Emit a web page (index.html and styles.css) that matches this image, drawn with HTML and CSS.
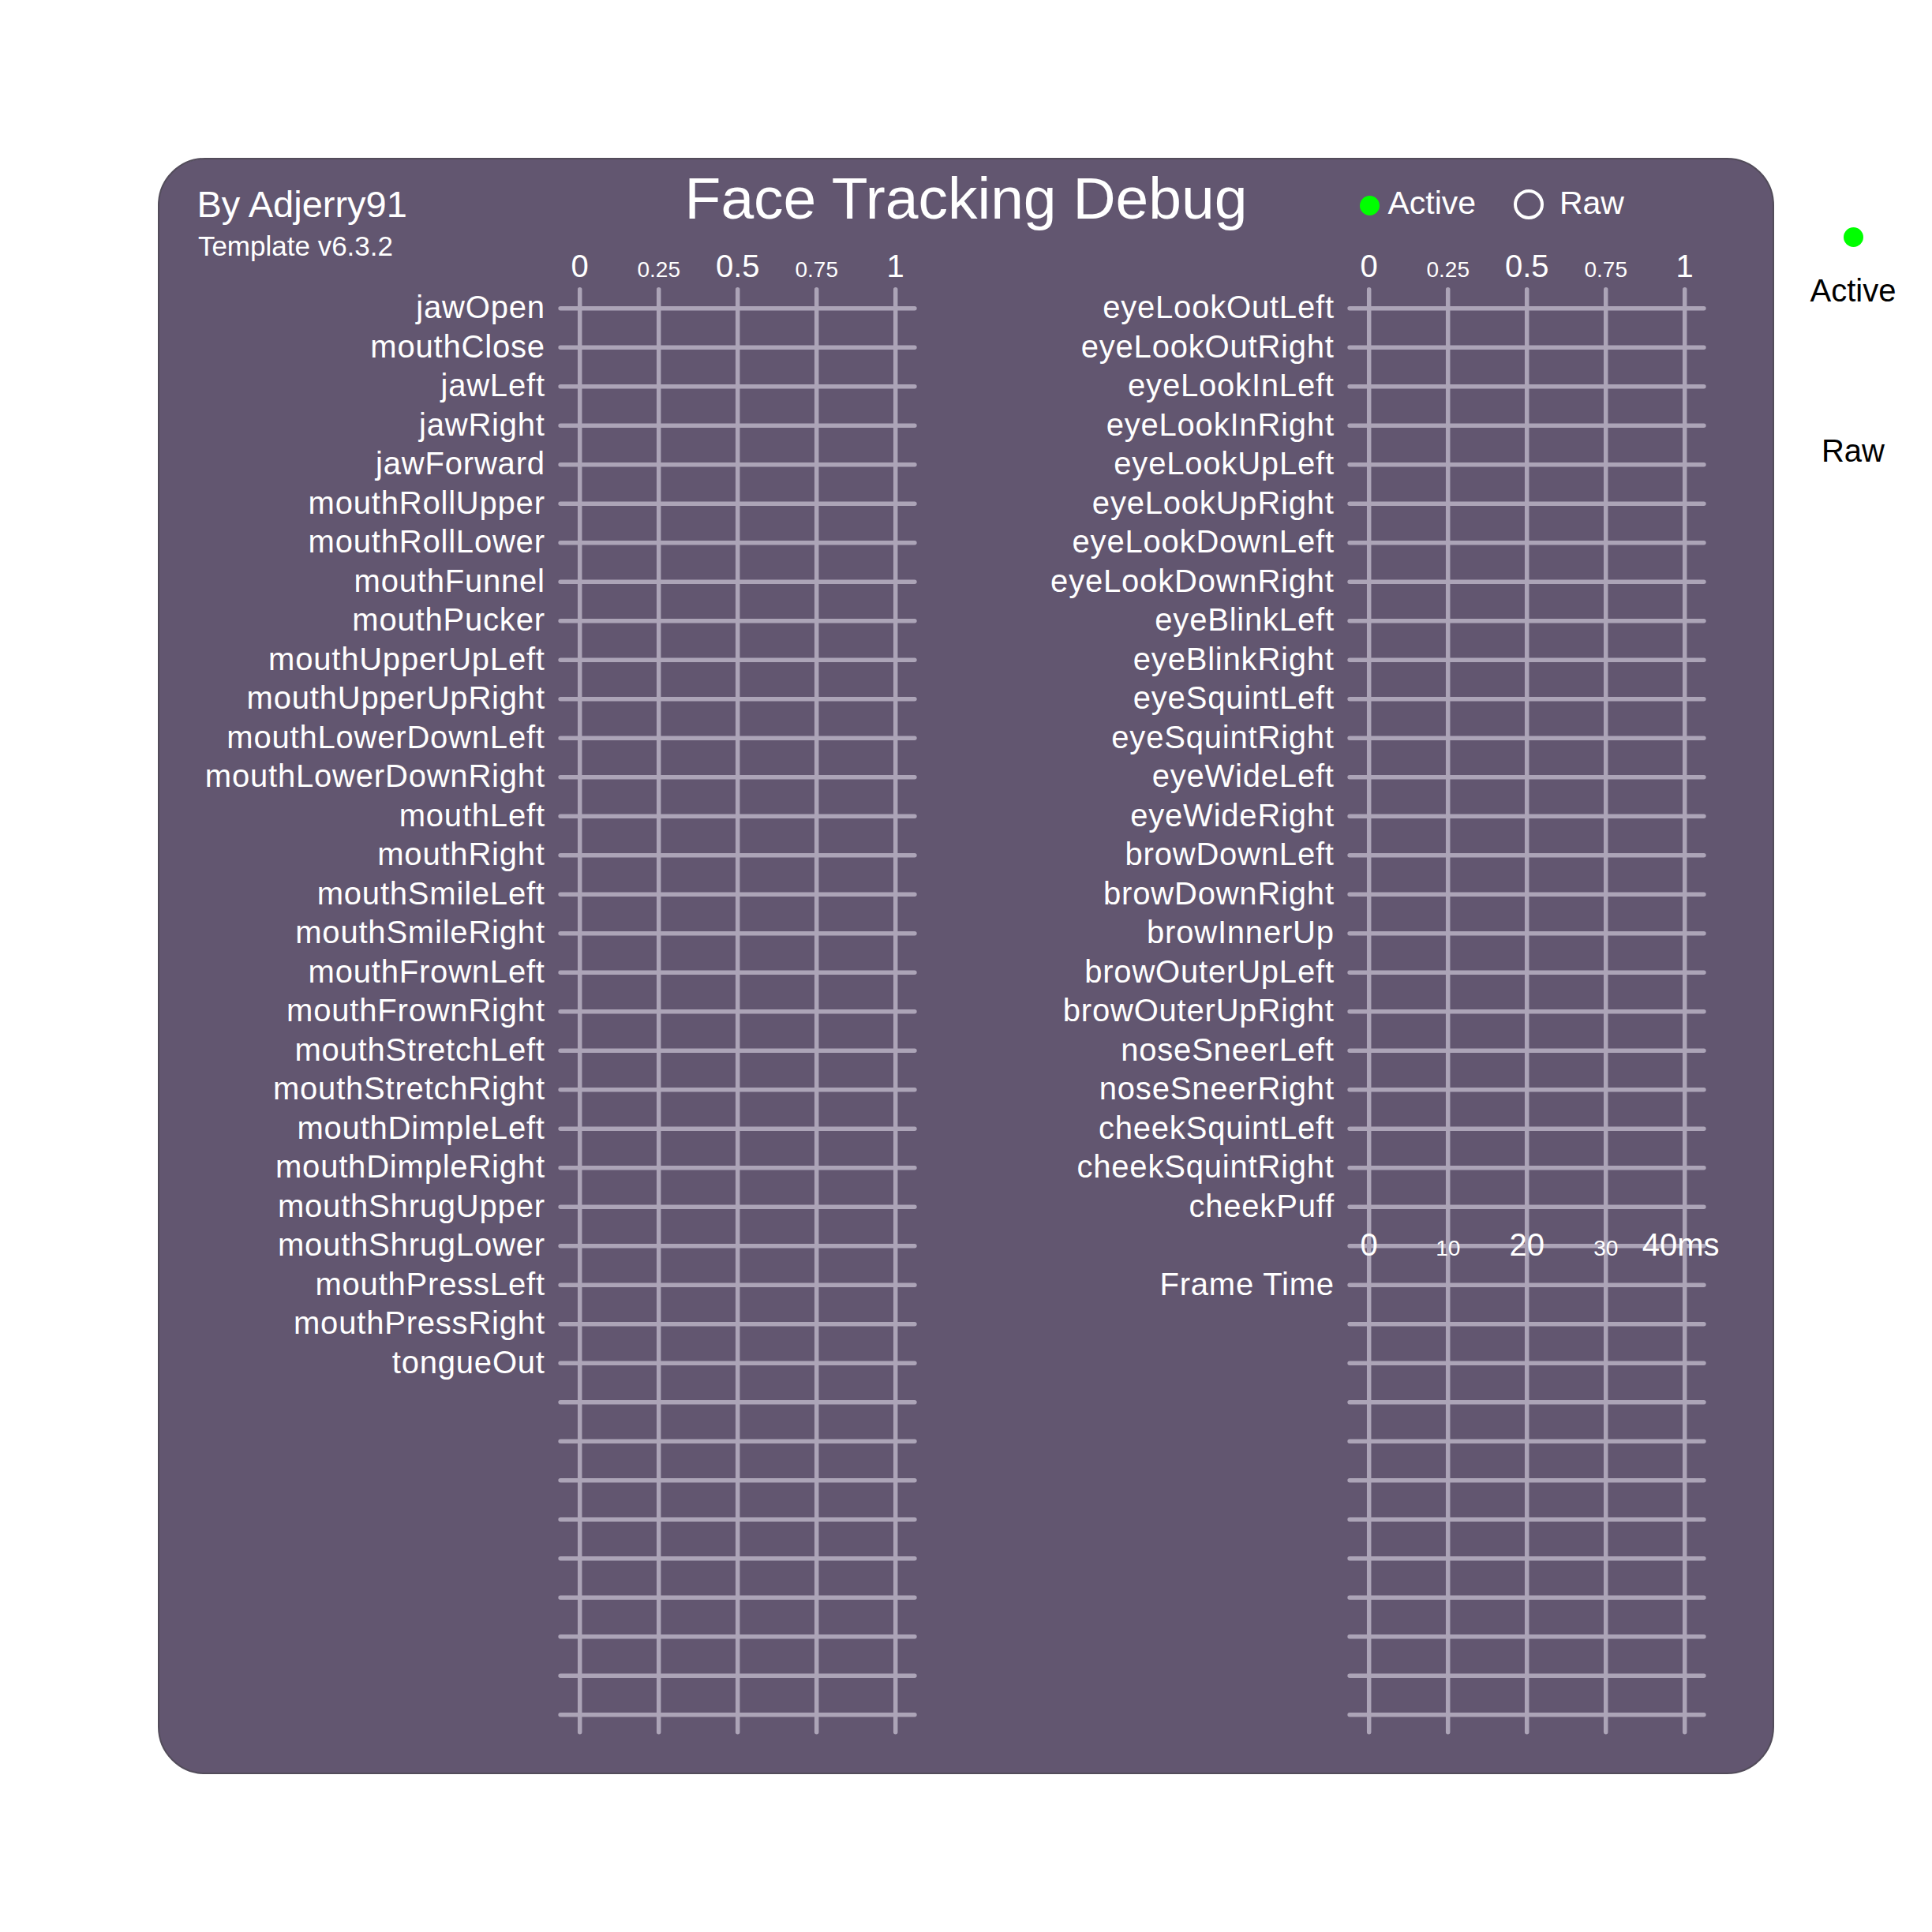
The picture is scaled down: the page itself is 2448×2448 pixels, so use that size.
FILE: index.html
```html
<!DOCTYPE html>
<html lang="en">
<head>
<meta charset="utf-8">
<title>Face Tracking Debug</title>
<link rel="stylesheet" href="styles.css">
</head>
<body>
<div class="panel">
  <header class="head">
    <div class="author">
      <div class="by">By Adjerry91</div>
      <div class="ver">Template v6.3.2</div>
    </div>
    <h1 class="title">Face Tracking Debug</h1>
    <div class="legend">
      <span class="dot"></span>
      <span class="leg-text">Active</span>
      <span class="ring"></span>
      <span class="leg-text raw">Raw</span>
    </div>
  </header>

  <div class="charts">
    <section class="chart">
      <div class="axis">
        <span class="big">0</span><span class="small">0.25</span><span class="big">0.5</span><span class="small">0.75</span><span class="big">1</span>
      </div>
      <div class="labels">
        <div class="label">jawOpen</div>
        <div class="label">mouthClose</div>
        <div class="label">jawLeft</div>
        <div class="label">jawRight</div>
        <div class="label">jawForward</div>
        <div class="label">mouthRollUpper</div>
        <div class="label">mouthRollLower</div>
        <div class="label">mouthFunnel</div>
        <div class="label">mouthPucker</div>
        <div class="label">mouthUpperUpLeft</div>
        <div class="label">mouthUpperUpRight</div>
        <div class="label">mouthLowerDownLeft</div>
        <div class="label">mouthLowerDownRight</div>
        <div class="label">mouthLeft</div>
        <div class="label">mouthRight</div>
        <div class="label">mouthSmileLeft</div>
        <div class="label">mouthSmileRight</div>
        <div class="label">mouthFrownLeft</div>
        <div class="label">mouthFrownRight</div>
        <div class="label">mouthStretchLeft</div>
        <div class="label">mouthStretchRight</div>
        <div class="label">mouthDimpleLeft</div>
        <div class="label">mouthDimpleRight</div>
        <div class="label">mouthShrugUpper</div>
        <div class="label">mouthShrugLower</div>
        <div class="label">mouthPressLeft</div>
        <div class="label">mouthPressRight</div>
        <div class="label">tongueOut</div>
      </div>
      <div class="plot">
        <svg class="grid" width="462" height="1831.5" viewBox="0 0 462 1831.5">
          <path class="gl" d="M30.7 0.75V1828.75M130.7 0.75V1828.75M230.7 0.75V1828.75M330.7 0.75V1828.75M430.7 0.75V1828.75
          M6.1 24.75H454.9M6.1 74.25H454.9M6.1 123.75H454.9M6.1 173.25H454.9M6.1 222.75H454.9M6.1 272.25H454.9M6.1 321.75H454.9M6.1 371.25H454.9M6.1 420.75H454.9M6.1 470.25H454.9
          M6.1 519.75H454.9M6.1 569.25H454.9M6.1 618.75H454.9M6.1 668.25H454.9M6.1 717.75H454.9M6.1 767.25H454.9M6.1 816.75H454.9M6.1 866.25H454.9M6.1 915.75H454.9M6.1 965.25H454.9
          M6.1 1014.75H454.9M6.1 1064.25H454.9M6.1 1113.75H454.9M6.1 1163.25H454.9M6.1 1212.75H454.9M6.1 1262.25H454.9M6.1 1311.75H454.9M6.1 1361.25H454.9M6.1 1410.75H454.9M6.1 1460.25H454.9
          M6.1 1509.75H454.9M6.1 1559.25H454.9M6.1 1608.75H454.9M6.1 1658.25H454.9M6.1 1707.75H454.9M6.1 1757.25H454.9M6.1 1806.75H454.9"/>
        </svg>
      </div>
    </section>

    <section class="chart">
      <div class="axis">
        <span class="big">0</span><span class="small">0.25</span><span class="big">0.5</span><span class="small">0.75</span><span class="big">1</span>
      </div>
      <div class="labels">
        <div class="label">eyeLookOutLeft</div>
        <div class="label">eyeLookOutRight</div>
        <div class="label">eyeLookInLeft</div>
        <div class="label">eyeLookInRight</div>
        <div class="label">eyeLookUpLeft</div>
        <div class="label">eyeLookUpRight</div>
        <div class="label">eyeLookDownLeft</div>
        <div class="label">eyeLookDownRight</div>
        <div class="label">eyeBlinkLeft</div>
        <div class="label">eyeBlinkRight</div>
        <div class="label">eyeSquintLeft</div>
        <div class="label">eyeSquintRight</div>
        <div class="label">eyeWideLeft</div>
        <div class="label">eyeWideRight</div>
        <div class="label">browDownLeft</div>
        <div class="label">browDownRight</div>
        <div class="label">browInnerUp</div>
        <div class="label">browOuterUpLeft</div>
        <div class="label">browOuterUpRight</div>
        <div class="label">noseSneerLeft</div>
        <div class="label">noseSneerRight</div>
        <div class="label">cheekSquintLeft</div>
        <div class="label">cheekSquintRight</div>
        <div class="label">cheekPuff</div>
        <div class="label"></div>
        <div class="label">Frame Time</div>
      </div>
      <div class="plot">
        <svg class="grid" width="462" height="1831.5" viewBox="0 0 462 1831.5">
          <path class="gl" d="M30.7 0.75V1828.75M130.7 0.75V1828.75M230.7 0.75V1828.75M330.7 0.75V1828.75M430.7 0.75V1828.75
          M6.1 24.75H454.9M6.1 74.25H454.9M6.1 123.75H454.9M6.1 173.25H454.9M6.1 222.75H454.9M6.1 272.25H454.9M6.1 321.75H454.9M6.1 371.25H454.9M6.1 420.75H454.9M6.1 470.25H454.9
          M6.1 519.75H454.9M6.1 569.25H454.9M6.1 618.75H454.9M6.1 668.25H454.9M6.1 717.75H454.9M6.1 767.25H454.9M6.1 816.75H454.9M6.1 866.25H454.9M6.1 915.75H454.9M6.1 965.25H454.9
          M6.1 1014.75H454.9M6.1 1064.25H454.9M6.1 1113.75H454.9M6.1 1163.25H454.9M6.1 1212.75H454.9M6.1 1262.25H454.9M6.1 1311.75H454.9M6.1 1361.25H454.9M6.1 1410.75H454.9M6.1 1460.25H454.9
          M6.1 1509.75H454.9M6.1 1559.25H454.9M6.1 1608.75H454.9M6.1 1658.25H454.9M6.1 1707.75H454.9M6.1 1757.25H454.9M6.1 1806.75H454.9"/>
        </svg>
        <div class="msaxis">
          <span class="big">0</span><span class="small">10</span><span class="big">20</span><span class="small">30</span><span class="big ms">40ms</span>
        </div>
      </div>
    </section>
  </div>
</div>

<aside class="side">
  <span class="side-dot"></span>
  <span class="side-text active">Active</span>
  <span class="side-text raw">Raw</span>
</aside>
</body>
</html>
```

FILE: styles.css
```css
html, body {
  margin: 0;
  padding: 0;
}

body {
  width: 2448px;
  height: 2448px;
  box-sizing: border-box;
  padding: 200px 0 0 200px;
  display: flex;
  align-items: flex-start;
  background: #ffffff;
  font-family: "Liberation Sans", Arial, sans-serif;
}

.panel {
  width: 2048px;
  height: 2048px;
  box-sizing: border-box;
  border: 2px solid #524c5a;
  border-radius: 60px;
  background: #625670;
  color: #ffffff;
  overflow: hidden;
}

/* ---------- header ---------- */
.head {
  display: grid;
  grid-template-columns: 1fr 800px 1fr;
  align-items: start;
  height: 115px;
}

.author {
  padding-left: 47.4px;
  padding-top: 31.4px;
  white-space: nowrap;
}

.by {
  font-size: 47px;
  line-height: 52px;
}

.ver {
  font-size: 35px;
  line-height: 40px;
  margin-top: 6.8px;
  margin-left: 1.5px;
}

.title {
  margin: 0;
  padding-top: 9.2px;
  font-size: 75px;
  line-height: 80px;
  font-weight: normal;
  text-align: center;
  white-space: nowrap;
}

.legend {
  display: flex;
  align-items: flex-start;
  margin-left: 99px;
  padding-top: 35.3px;
  white-space: nowrap;
}

.dot {
  width: 25px;
  height: 25px;
  border-radius: 50%;
  background: #00ff00;
  margin-top: 10.9px;
  margin-right: 10.5px;
  flex: none;
}

.leg-text {
  font-size: 41px;
  line-height: 41px;
}

.ring {
  width: 38px;
  height: 38px;
  box-sizing: border-box;
  border: 4.5px solid #ffffff;
  border-radius: 50%;
  margin-top: 2.7px;
  margin-left: 47.5px;
  margin-right: 20.3px;
  flex: none;
}

/* ---------- charts ---------- */
.charts {
  display: flex;
  gap: 38px;
  padding-left: 2px;
}

.chart {
  display: grid;
  grid-template-columns: 486px 462px;
  grid-template-rows: 49px 1831.5px;
  column-gap: 14px;
}

.axis {
  grid-column: 2;
  grid-row: 1;
  display: grid;
  grid-template-columns: repeat(5, 100px);
  justify-items: center;
  align-items: baseline;
  margin-left: -19.3px;
  width: 500px;
  line-height: 1;
  white-space: nowrap;
}

.big {
  font-size: 40px;
}

.small {
  font-size: 28px;
}

.labels {
  grid-column: 1;
  grid-row: 2;
  display: flex;
  flex-direction: column;
}

.label {
  height: 49.5px;
  line-height: 47px;
  font-size: 40px;
  letter-spacing: 0.8px;
  margin-right: -0.8px;
  text-align: right;
  white-space: nowrap;
}

.plot {
  grid-column: 2;
  grid-row: 2;
  display: grid;
  grid-template-columns: 462px;
  grid-template-rows: repeat(37, 49.5px);
}

.grid {
  grid-column: 1;
  grid-row: 1 / -1;
  display: block;
  overflow: visible;
}

.gl {
  fill: none;
  stroke: #aca4b7;
  stroke-width: 5.5;
  stroke-linecap: round;
}

.msaxis {
  grid-column: 1;
  grid-row: 25;
  display: grid;
  grid-template-columns: repeat(5, 100px);
  justify-items: center;
  align-items: baseline;
  margin-left: -19.3px;
  width: 500px;
  line-height: 46px;
  white-space: nowrap;
}

.ms {
  padding-right: 10px;
}

/* ---------- outside legend ---------- */
.side {
  width: 200px;
  display: flex;
  flex-direction: column;
  align-items: center;
  padding-top: 87.5px;
  color: #000000;
}

.side-dot {
  width: 25px;
  height: 25px;
  border-radius: 50%;
  background: #00ff00;
}

.side-text {
  font-size: 40px;
  line-height: 40px;
}

.side-text.active {
  margin-top: 35.6px;
}

.side-text.raw {
  margin-top: 163px;
}
```
